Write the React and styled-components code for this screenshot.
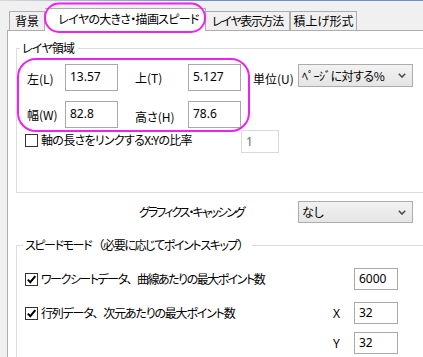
import React from "react";
import styled, { createGlobalStyle } from "styled-components";

const GlobalStyle = createGlobalStyle`
  html, body {
    margin: 0;
    padding: 0;
    background: #f0f0f0;
  }
  body {
    font-family: "Noto Sans CJK JP", "Noto Sans", sans-serif;
    font-size: 12px;
    color: #000;
  }
`;

const Window = styled.div`
  position: relative;
  width: 423px;
  height: 357px;
  overflow: hidden;
  background: #f0f0f0;
  display: flex;
  flex-direction: column;
  font-feature-settings: "palt";
  line-height: 16px;
`;

const TopLine = styled.div`
  flex: none;
  height: 1px;
  background: linear-gradient(to right, #d8d8d8, #6f8fc8 45%);
`;

const TabStrip = styled.div`
  flex: none;
  position: relative;
  z-index: 1;
  display: flex;
  align-items: flex-end;
  height: 29px;
  padding-left: 9px;
`;

const Tab = styled.div`
  box-sizing: border-box;
  width: ${(p) => p.$w}px;
  height: ${(p) => (p.$active ? 23 : 19)}px;
  margin-bottom: ${(p) => (p.$active ? -1 : 0)}px;
  border: 1px solid #adadad;
  border-bottom: none;
  border-left: ${(p) => (p.$joined ? "none" : "1px solid #adadad")};
  background: ${(p) => (p.$active ? "#fff" : "#f0f0f0")};
  display: flex;
  align-items: center;
  justify-content: center;
  padding: 0 0 ${(p) => (p.$active ? 3 : 0)}px ${(p) => (p.$active ? 7 : 0)}px;
  letter-spacing: ${(p) => p.$tight || 0}px;
  white-space: nowrap;
`;

const Panel = styled.div`
  flex: 1;
  margin-left: 7px;
  padding-left: 8px;
  background: #fff;
  border-top: 1px solid #adadad;
  border-left: 1px solid #adadad;
`;

const GroupBox = styled.fieldset`
  box-sizing: border-box;
  width: 500px;
  min-width: 0;
  margin: ${(p) => p.$top}px 0 0 0;
  padding: 0;
  border: 1px solid #dcdcdc;
`;

const Legend = styled.legend`
  margin-left: ${(p) => p.$offset}px;
  padding: 0 4px 0 2px;
  line-height: 16px;
  letter-spacing: ${(p) => p.$tight || 0}px;
  white-space: nowrap;
`;

const Wide = styled.span`
  font-feature-settings: normal;
`;

const GroupBody = styled.div`
  padding: ${(p) => p.$pad};
`;

const Coords = styled.div`
  display: grid;
  grid-template-columns: 38px 53px 70px 53px 57px 115px;
  grid-template-rows: 27px 27px;
  row-gap: 10px;
  align-items: center;
`;

const Label = styled.span`
  padding-left: ${(p) => p.$indent || 0}px;
  padding-top: ${(p) => p.$drop || 0}px;
  white-space: nowrap;
`;

const Field = styled.div`
  box-sizing: border-box;
  width: ${(p) => p.$w}px;
  height: ${(p) => p.$h}px;
  padding: ${(p) => p.$padTop}px 0 0 4px;
  border: 1px solid ${(p) => (p.$disabled ? "#d9d9d9" : "#a9a9a9")};
  color: ${(p) => (p.$disabled ? "#6d6d6d" : "#000")};
  background: #fff;
  font-family: "Noto Sans", "Noto Sans CJK JP", sans-serif;
  font-size: 12px;
  line-height: 16px;
`;

const Select = styled.div`
  box-sizing: border-box;
  width: 115px;
  height: ${(p) => p.$h}px;
  align-self: start;
  display: flex;
  align-items: center;
  justify-content: space-between;
  padding: 0 6px 0 3px;
  border: 1px solid #acacac;
  background: linear-gradient(#f2f2f2, #e5e5e5);
  letter-spacing: ${(p) => p.$tight || 0}px;
  white-space: nowrap;
`;

const CheckRow = styled.div`
  display: flex;
  align-items: flex-start;
  height: 23px;
  margin: 2px 0 0 -2px;
`;

const CheckLabel = styled.label`
  display: flex;
  align-items: center;
  gap: 3px;
  width: ${(p) => (p.$w ? `${p.$w}px` : "auto")};
  margin-top: ${(p) => p.$drop || 0}px;
  letter-spacing: ${(p) => p.$tight || 0}px;
  white-space: nowrap;
`;

const Box = styled.span`
  box-sizing: border-box;
  flex: none;
  width: 13px;
  height: 13px;
  border: 1px solid #333;
  background: #fff;
  display: flex;
  align-items: center;
  justify-content: center;
`;

const CacheRow = styled.div`
  display: flex;
  align-items: center;
  margin: 8px 0 0 123px;
`;

const CacheLabel = styled.span`
  width: 159px;
  letter-spacing: -2px;
  white-space: nowrap;
`;

const SpeedRow = styled.div`
  display: grid;
  grid-template-columns: 308px 21px 44px;
  height: 22px;
  align-items: center;
  margin-top: ${(p) => p.$gap}px;
`;

const Axis = styled.span`
  font-family: "Noto Sans", sans-serif;
  padding-top: 2px;
`;

const Overlay = styled.svg`
  position: absolute;
  left: 0;
  top: 0;
  z-index: 5;
  pointer-events: none;
`;

const Chevron = () => (
  <svg width="8" height="5" viewBox="0 0 8 5">
    <polyline points="0.8,0.8 4,4 7.2,0.8" fill="none" stroke="#4a4a4a" strokeWidth="1.6" />
  </svg>
);

const Checkbox = ({ checked }) => (
  <Box>
    {checked && (
      <svg width="11" height="11" viewBox="0 0 11 11">
        <polyline points="1.8,5.6 4.3,8.2 9.3,2.2" fill="none" stroke="#000" strokeWidth="2" />
      </svg>
    )}
  </Box>
);

export default function App() {
  return (
    <Window>
      <GlobalStyle />
      <TopLine />
      <TabStrip>
        <Tab $w={36}>背景</Tab>
        <Tab $w={161} $active $joined $tight={-0.7}>レイヤの大きさ・描画スピード</Tab>
        <Tab $w={84} $joined $tight={-1.3}>レイヤ表示方法</Tab>
        <Tab $w={67}>積上げ形式</Tab>
      </TabStrip>
      <Panel>
        <GroupBox $top={9}>
          <Legend $offset={3} $tight={-0.8}>レイヤ領域</Legend>
          <GroupBody $pad="8px 0 39px 10px">
            <Coords>
              <Label $drop={3}>左(L)</Label>
              <Field $w={53} $h={27} $padTop={4}>13.57</Field>
              <Label $indent={17} $drop={1}>上(T)</Label>
              <Field $w={53} $h={27} $padTop={4}>5.127</Field>
              <Label $indent={12} $drop={3}>単位(U)</Label>
              <Select $h={23} $tight={-0.5}>
                ﾍﾟｰｼﾞに対する%
                <Chevron />
              </Select>
              <Label $drop={1}>幅(W)</Label>
              <Field $w={53} $h={27} $padTop={4}>82.8</Field>
              <Label $indent={17} $drop={4}>高さ(H)</Label>
              <Field $w={53} $h={27} $padTop={4}>78.6</Field>
            </Coords>
            <CheckRow>
              <CheckLabel $w={216} $drop={2} $tight={-0.7}>
                <Checkbox />
                軸の長さをリンクするX:Yの比率
              </CheckLabel>
              <Field $w={38} $h={23} $padTop={3} $disabled>1</Field>
            </CheckRow>
          </GroupBody>
        </GroupBox>
        <CacheRow>
          <CacheLabel>グラフィクス・キャッシング</CacheLabel>
          <Select $h={22}>
            なし
            <Chevron />
          </Select>
        </CacheRow>
        <GroupBox $top={14}>
          <Legend $offset={6} $tight={-1.4}>
            スピードモード <Wide>（</Wide>必要に応じてポイントスキップ<Wide>）</Wide>
          </Legend>
          <GroupBody $pad="15px 0 20px 8px">
            <SpeedRow $gap={0}>
              <CheckLabel $tight={-1.5}>
                <Checkbox checked />
                <span>
                  ワークシートデータ<Wide>、</Wide>曲線あたりの最大ポイント数
                </span>
              </CheckLabel>
              <span />
              <Field $w={44} $h={22} $padTop={2}>6000</Field>
            </SpeedRow>
            <SpeedRow $gap={12}>
              <CheckLabel $tight={-1.2}>
                <Checkbox checked />
                <span>
                  行列データ<Wide>、</Wide>次元あたりの最大ポイント数
                </span>
              </CheckLabel>
              <Axis>X</Axis>
              <Field $w={44} $h={22} $padTop={2}>32</Field>
            </SpeedRow>
            <SpeedRow $gap={8}>
              <span />
              <Axis>Y</Axis>
              <Field $w={44} $h={22} $padTop={2}>32</Field>
            </SpeedRow>
          </GroupBody>
        </GroupBox>
      </Panel>
      <Overlay width="423" height="357">
        <rect x="45" y="3.5" width="160" height="28.5" rx="14" fill="none" stroke="#ee22ee" strokeWidth="2" />
        <rect x="18" y="59" width="231" height="72" rx="18" fill="none" stroke="#ee22ee" strokeWidth="2" />
      </Overlay>
    </Window>
  );
}
